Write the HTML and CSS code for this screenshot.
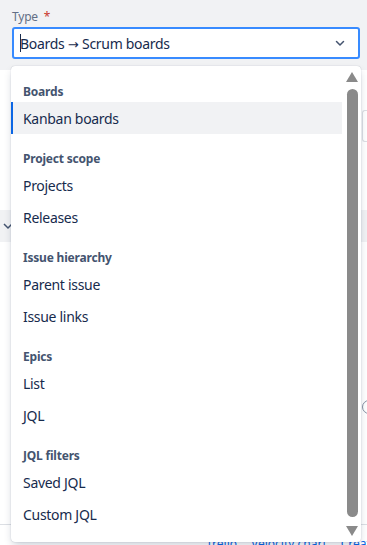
FILE: index.html
```html
<!DOCTYPE html>
<html lang="en">
<head>
    <meta charset="UTF-8">
    <meta name="viewport" content="width=device-width, initial-scale=1.0">
    <title>Gadget type</title>
    <link rel="stylesheet" href="styles.css">
</head>
<body>
    <div class="form-top">
        <label class="field-label">Type <span class="required">*</span></label>
        <div class="select">
            <span class="caret"></span>
            <span class="select-value">Boards <span class="arrow">→</span> Scrum boards</span>
            <svg class="chevron" width="16" height="16" viewBox="0 0 16 16">
                <path d="M4.5 6.5 8 10l3.5-3.5" fill="none" stroke="#44546f" stroke-width="1.5" stroke-linecap="round" stroke-linejoin="round"/>
            </svg>
        </div>
    </div>

    <div class="form-body">
        <div class="ghost-input"></div>
        <div class="section-bar">
            <svg width="12" height="12" viewBox="0 0 12 12">
                <path d="M2 4l4 4 4-4" fill="none" stroke="#44546f" stroke-width="1.5"/>
            </svg>
        </div>
        <div class="info-row"><span class="info-icon"></span></div>
        <div class="footer">
            <a href="#">Trello</a>
            <a href="#">Velocity chart</a>
            <a href="#">Create</a>
        </div>
    </div>

    <!-- open dropdown menu -->
    <div class="menu">
        <div class="menu-list">
            <div class="group">
                <div class="group-heading">Boards</div>
                <div class="option focused">Kanban boards</div>
            </div>
            <div class="group">
                <div class="group-heading">Project scope</div>
                <div class="option">Projects</div>
                <div class="option">Releases</div>
            </div>
            <div class="group">
                <div class="group-heading">Issue hierarchy</div>
                <div class="option">Parent issue</div>
                <div class="option">Issue links</div>
            </div>
            <div class="group">
                <div class="group-heading">Epics</div>
                <div class="option">List</div>
                <div class="option">JQL</div>
            </div>
            <div class="group">
                <div class="group-heading">JQL filters</div>
                <div class="option">Saved JQL</div>
                <div class="option">Custom JQL</div>
            </div>
        </div>
        <div class="scrollbar">
            <span class="arrow-up"></span>
            <span class="thumb"></span>
            <span class="arrow-down"></span>
        </div>
    </div>
</body>
</html>
```

FILE: styles.css
```css
* {
    margin: 0;
    padding: 0;
    box-sizing: border-box;
}

body {
    font-family: "Segoe UI", "Noto Sans", sans-serif;
    background: #ffffff;
    color: #172b4d;
    width: 367px;
    height: 545px;
    overflow: hidden;
    position: relative;
}

.form-top {
    background: #f1f2f4;
    height: 70px;
    padding: 9px 7px 0 12px;
}

.field-label {
    display: block;
    font-size: 12px;
    line-height: 16px;
    color: #626f86;
    margin-bottom: 2px;
    letter-spacing: -0.2px;
}

.required {
    color: #c9372c;
    margin-left: 3px;
}

.select {
    display: flex;
    align-items: center;
    height: 32px;
    background: #ffffff;
    border: 2px solid #388bff;
    border-radius: 3px;
    padding: 0 8px 0 6px;
}

.caret {
    width: 1px;
    height: 18px;
    background: #172b4d;
    margin-right: -1px;
}

.select-value {
    flex: 1;
    font-size: 14px;
    color: #172b4d;
    letter-spacing: -0.3px;
}

.arrow {
    font-family: "DejaVu Sans", sans-serif;
    font-size: 13px;
    letter-spacing: 0;
}

.chevron {
    margin-right: 2px;
}

.form-body {
    padding-top: 40px;
}

.ghost-input {
    height: 32px;
    margin-left: 362px;
    border: 1px solid #dcdfe4;
    border-right: none;
    border-radius: 3px 0 0 3px;
}

.section-bar {
    margin-top: 68px;
    height: 32px;
    background: #f1f2f4;
    display: flex;
    align-items: center;
    padding-left: 2px;
}

.info-row {
    margin-top: 158px;
    height: 20px;
    display: flex;
    justify-content: flex-end;
}

.info-icon {
    width: 14px;
    height: 14px;
    border: 1px solid #8590a2;
    border-radius: 50%;
    margin-right: -9px;
}

.footer {
    margin-top: 104px;
    border-top: 1px solid #dcdfe4;
    padding: 12px 0 0 206px;
    display: flex;
    gap: 14px;
    font-size: 12px;
    line-height: 14px;
    white-space: nowrap;
}

.footer a {
    color: #0c66e4;
    text-decoration: none;
}

/* open menu over the form */
.menu {
    position: absolute;
    top: 66px;
    left: 11px;
    width: 350px;
    height: 476px;
    background: #ffffff;
    border-radius: 4px;
    box-shadow: 0 4px 8px -2px rgba(9, 30, 66, 0.25), 0 0 1px rgba(9, 30, 66, 0.31);
    display: flex;
    overflow: hidden;
}

.menu-list {
    flex: 1;
    padding-top: 1px;
}

.group {
    padding-top: 17px;
}

.group-heading {
    font-size: 12px;
    line-height: 16px;
    font-weight: 700;
    color: #44546f;
    padding: 0 12px;
    margin-bottom: 2px;
    letter-spacing: -0.2px;
}

.option {
    height: 32px;
    display: flex;
    align-items: center;
    font-size: 14px;
    color: #172b4d;
    border-left: 2px solid transparent;
    padding: 0 12px 0 10px;
    letter-spacing: -0.3px;
}

.option.focused {
    background: #f1f2f4;
    border-left-color: #0c66e4;
}

.scrollbar {
    width: 19px;
    display: flex;
    flex-direction: column;
    align-items: center;
    padding: 6px 0 6px 1px;
}

.arrow-up,
.arrow-down {
    width: 0;
    height: 0;
    border-left: 6px solid transparent;
    border-right: 6px solid transparent;
}

.arrow-up {
    border-bottom: 10px solid #8a8a8a;
}

.arrow-down {
    border-top: 10px solid #8a8a8a;
}

.thumb {
    flex: 1;
    width: 11px;
    background: #8a8a8a;
    border-radius: 6px;
    margin: 7px 0 9px;
}
```
